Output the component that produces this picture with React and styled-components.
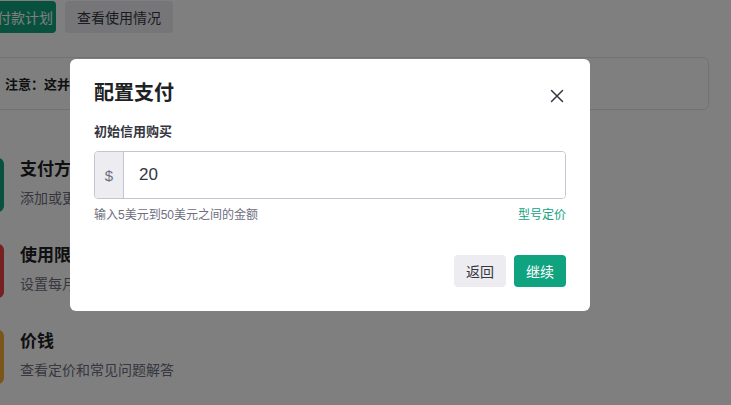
import React from "react";
import styled, { createGlobalStyle } from "styled-components";

const GlobalStyle = createGlobalStyle`
  body {
    margin: 0;
    background: #ffffff;
    overflow: hidden;
    font-family: "Liberation Sans", "Noto Sans CJK SC", sans-serif;
    color: #353740;
  }
`;

const cards = [
  { title: "支付方式", text: "添加或更新付款方式", color: "#10a37f" },
  { title: "使用限制", text: "设置每月支出限额", color: "#ef4146" },
  { title: "价钱", text: "查看定价和常见问题解答", color: "#f4ac36" },
];

export default function App() {
  return (
    <>
      <GlobalStyle />
      <Page>
        <ButtonRow>
          <Button $primary>设置付款计划</Button>
          <Button>查看使用情况</Button>
        </ButtonRow>
        <Notice>
          注意：这并不会立即向您收费。我们会在每个月底根据您的使用情况向您开具账单。
        </Notice>
        <CardList>
          {cards.map(card => (
            <Card key={card.title}>
              <Tile $color={card.color} />
              <CardBody>
                <CardTitle>{card.title}</CardTitle>
                <CardText>{card.text}</CardText>
              </CardBody>
            </Card>
          ))}
        </CardList>
      </Page>
      <Overlay>
        <Modal>
          <ModalHeader>
            <ModalTitle>配置支付</ModalTitle>
            <CloseButton aria-label="关闭">
              <svg width="14" height="14" viewBox="0 0 14 14">
                <path
                  d="M1.5 1.5l11 11M12.5 1.5l-11 11"
                  stroke="#353740"
                  strokeWidth="1.5"
                  strokeLinecap="round"
                />
              </svg>
            </CloseButton>
          </ModalHeader>
          <Label>初始信用购买</Label>
          <InputGroup>
            <Prefix>$</Prefix>
            <AmountInput defaultValue="20" />
          </InputGroup>
          <HelpRow>
            <span>输入5美元到50美元之间的金额</span>
            <HelpLink>型号定价</HelpLink>
          </HelpRow>
          <Footer>
            <ModalButton>返回</ModalButton>
            <ModalButton $primary>继续</ModalButton>
          </Footer>
        </Modal>
      </Overlay>
    </>
  );
}

const Page = styled.div`
  margin-left: -50px;
  padding: 1px 22px 0 0;
  display: flex;
  flex-direction: column;
`;

const ButtonRow = styled.div`
  display: flex;
  gap: 9px;
  padding-left: 7px;
`;

const Button = styled.button`
  height: 32px;
  padding: ${p => (p.$primary ? "0 3px 0 12px" : "0 12px")};
  border: none;
  border-radius: 4px;
  font: inherit;
  font-size: 14px;
  background: ${p => (p.$primary ? "#10a37f" : "#ececf1")};
  color: ${p => (p.$primary ? "#ffffff" : "#353740")};
`;

const Notice = styled.div`
  margin-top: 24px;
  height: 53px;
  box-sizing: border-box;
  display: flex;
  align-items: center;
  padding-left: 54px;
  border: 1px solid #e5e5e5;
  border-radius: 6px;
  font-size: 13px;
  font-weight: 700;
  color: #202123;
  white-space: nowrap;
  overflow: hidden;
`;

const CardList = styled.div`
  margin-top: 48px;
  display: flex;
  flex-direction: column;
  gap: 32px;
`;

const Card = styled.div`
  display: flex;
  gap: 16px;
`;

const Tile = styled.div`
  width: 54px;
  height: 54px;
  border-radius: 6px;
  background: ${p => p.$color};
  flex-shrink: 0;
`;

const CardBody = styled.div`
  display: flex;
  flex-direction: column;
  gap: 6px;
`;

const CardTitle = styled.div`
  font-size: 17px;
  line-height: 24px;
  font-weight: 700;
  color: #202123;
`;

const CardText = styled.div`
  font-size: 14px;
  line-height: 20px;
  color: #6e6e80;
`;

const Overlay = styled.div`
  position: fixed;
  inset: 0;
  background: rgba(0, 0, 0, 0.5);
  display: flex;
  align-items: flex-start;
  padding: 59px 0 0 70px;
`;

const Modal = styled.div`
  width: 520px;
  height: 252px;
  box-sizing: border-box;
  background: #ffffff;
  border-radius: 6px;
  padding: 20px 24px 24px;
  display: flex;
  flex-direction: column;
`;

const ModalHeader = styled.div`
  display: flex;
  align-items: center;
  justify-content: space-between;
  height: 28px;
`;

const ModalTitle = styled.h2`
  margin: 0;
  font-size: 20px;
  line-height: 28px;
  font-weight: 700;
  color: #202123;
`;

const CloseButton = styled.button`
  border: none;
  background: none;
  padding: 0;
  margin-right: 2px;
  margin-top: 6px;
  display: flex;
`;

const Label = styled.div`
  margin-top: 16px;
  font-size: 13px;
  line-height: 18px;
  font-weight: 700;
  color: #353740;
`;

const InputGroup = styled.div`
  margin-top: 10px;
  height: 48px;
  box-sizing: border-box;
  display: flex;
  border: 1px solid #c5c5d2;
  border-radius: 4px;
  overflow: hidden;
`;

const Prefix = styled.div`
  width: 28px;
  display: flex;
  align-items: center;
  justify-content: center;
  background: #ececf1;
  border-right: 1px solid #c5c5d2;
  font-size: 15px;
  color: #6e6e80;
`;

const AmountInput = styled.input`
  flex: 1;
  border: none;
  outline: none;
  padding: 0 15px;
  font-family: inherit;
  font-size: 17px;
  color: #353740;
`;

const HelpRow = styled.div`
  margin-top: 8px;
  display: flex;
  justify-content: space-between;
  font-size: 12px;
  line-height: 16px;
  color: #6e6e80;
`;

const HelpLink = styled.a`
  color: #10a37f;
  text-decoration: none;
`;

const Footer = styled.div`
  margin-top: auto;
  display: flex;
  justify-content: flex-end;
  gap: 8px;
`;

const ModalButton = styled.button`
  height: 32px;
  padding: 0 12px;
  border: none;
  border-radius: 4px;
  font-family: inherit;
  font-size: 14px;
  background: ${p => (p.$primary ? "#10a37f" : "#ececf1")};
  color: ${p => (p.$primary ? "#ffffff" : "#353740")};
`;
